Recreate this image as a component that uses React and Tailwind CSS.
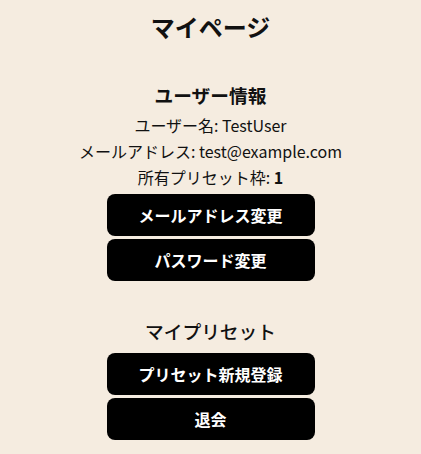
import React from "react";

const btn =
  "w-52 h-[42px] rounded-lg bg-black text-white text-base font-bold flex items-center justify-center";

export default function App() {
  return (
    <div
      className="min-h-[454px] bg-[#f5ece0] text-[#111] flex flex-col items-center"
      style={{ fontFamily: '"Noto Sans CJK JP", "Noto Sans", sans-serif' }}
    >
      <h2 className="mt-[11px] text-[24px] leading-[32px] font-bold">マイページ</h2>

      {/* USER INFO */}
      <h3 className="mt-[38px] text-[18.72px] leading-[28px] font-bold">ユーザー情報</h3>
      <div className="mt-[3px] flex flex-col items-center text-base leading-[26px]">
        <p>ユーザー名: TestUser</p>
        <p>メールアドレス: test@example.com</p>
        <p>
          所有プリセット枠: <span className="font-bold">1</span>
        </p>
      </div>
      <div className="mt-1 flex flex-col gap-[3px]">
        <button className={btn}>メールアドレス変更</button>
        <button className={btn}>パスワード変更</button>
      </div>

      {/* PRESETS */}
      <h3 className="mt-[36px] text-[18.72px] leading-[28px] font-medium">マイプリセット</h3>
      <div className="mt-2 flex flex-col gap-[3px]">
        <button className={btn}>プリセット新規登録</button>
        <button className={btn}>退会</button>
      </div>
    </div>
  );
}
